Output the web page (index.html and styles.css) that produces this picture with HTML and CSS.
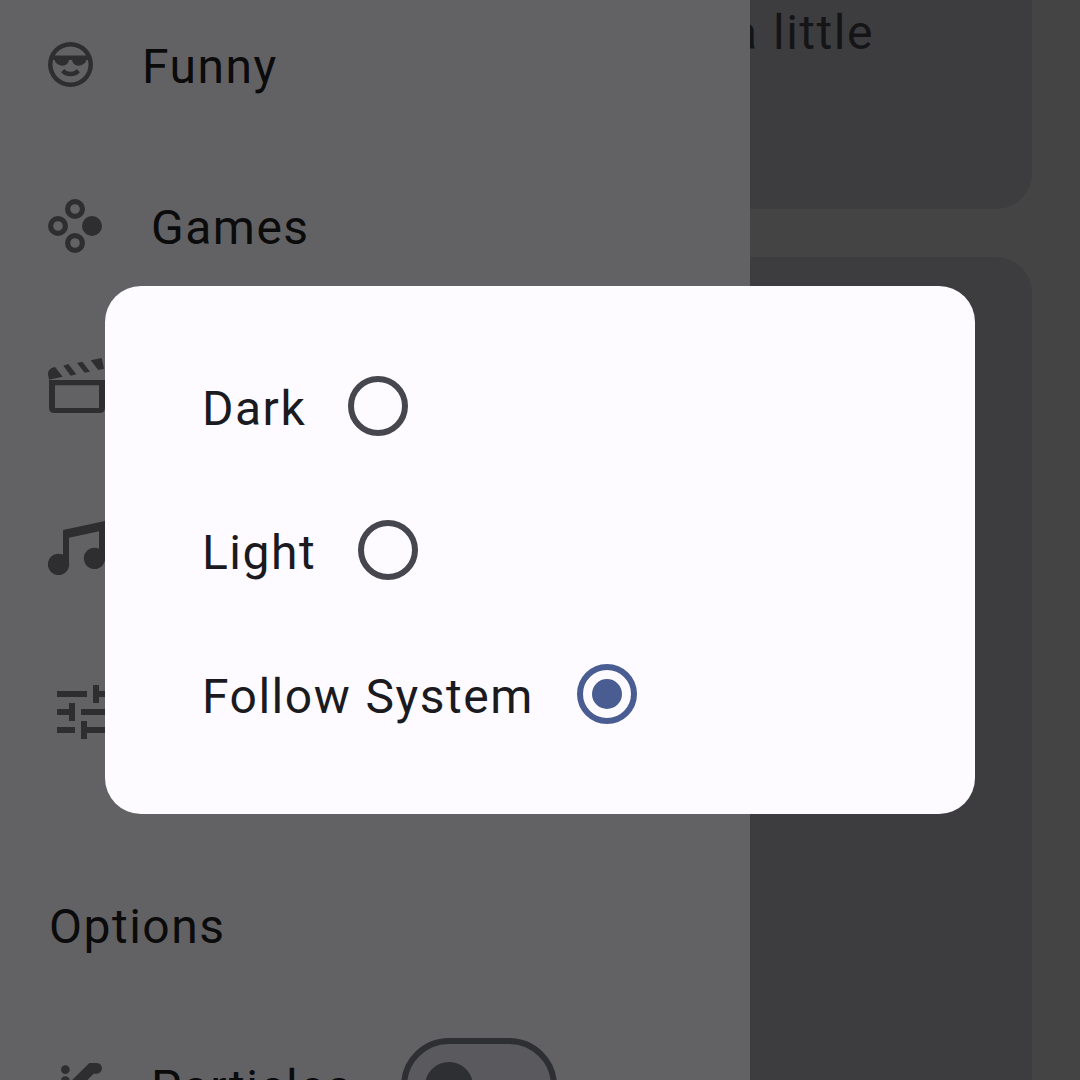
FILE: index.html
```html
<!DOCTYPE html>
<html lang="en">
<head>
<meta charset="utf-8">
<title>Theme</title>
<link rel="stylesheet" href="styles.css">
</head>
<body>
<div class="screen">
  <nav class="drawer">
    <div class="item item-first">
      <svg width="45" height="45" viewBox="2 2 20 20"><path d="M19,10C19,11.38 16.88,12.5 15.5,12.5C14.12,12.5 12.75,11.38 12.75,10H11.25C11.25,11.38 9.88,12.5 8.5,12.5C7.12,12.5 5,11.38 5,10H4.25C4.09,10.64 4,11.31 4,12A8,8 0 0,0 12,20A8,8 0 0,0 20,12C20,11.31 19.91,10.64 19.75,10H19M12,4C9.04,4 6.45,5.61 5.07,8H18.93C17.55,5.61 14.96,4 12,4M22,12A10,10 0 0,1 12,22A10,10 0 0,1 2,12A10,10 0 0,1 12,2A10,10 0 0,1 22,12M12,17.23C10.25,17.23 8.71,16.5 7.81,15.42L9.23,14C9.68,14.72 10.75,15.23 12,15.23C13.25,15.23 14.32,14.72 14.77,14L16.19,15.42C15.29,16.5 13.75,17.23 12,17.23Z"/></svg>
      <span class="label">Funny</span>
    </div>
    <div class="item">
      <svg width="54" height="54" viewBox="0 0 54 54"><g class="ring"><circle cx="27" cy="10" r="7.4"/><circle cx="10" cy="27" r="7.4"/><circle cx="27" cy="44" r="7.4"/></g><circle cx="44" cy="27" r="10"/></svg>
      <span class="label">Games</span>
    </div>
    <div class="item">
      <svg width="57" height="58" viewBox="54 54 171 174"><path d="M57 119L54 103C53 92 63 82 76 82L98 110ZM100 77L115 72L139 103L122 107ZM141 69L157 65L180 95L164 98ZM182 61L215 54L222 86L205 90Z"/><path fill-rule="evenodd" d="M57 120H225V203Q225 219 209 219H73Q57 219 57 203ZM75 136V204H207V136Z"/></svg>
    </div>
    <div class="item">
      <svg width="57" height="56" viewBox="54 60 171 168"><path d="M99 90L228 62V175H207V94L117 113V193H99Z"/><circle cx="85.5" cy="193" r="32"/><circle cx="193.500" cy="175" r="32"/></svg>
    </div>
    <div class="item item-tune">
      <svg width="72" height="72" viewBox="0 0 24 24"><path d="M3,17v2h6v-2L3,17zM3,5v2h10L13,5L3,5zM13,21v-2h8v-2h-8v-2h-2v6h2zM7,9v2L3,11v2h4v2h2L9,9L7,9zM21,13v-2L11,11v2h10zM15,9h2L17,7h4L21,5h-4L17,3h-2v6z"/></svg>
    </div>
    <div class="heading">Options</div>
    <div class="item item-switch">
      <svg class="wand" width="54" height="54" viewBox="54 126 162 162"><circle cx="106" cy="149" r="13"/><circle cx="106" cy="182" r="13"/><path d="M178 129H200A16 16 0 0 1 200 161H191L100 252L78 228Z"/></svg>
      <span class="label">Particles</span>
      <span class="switch"><span class="thumb"></span></span>
    </div>
  </nav>
  <main class="feed">
    <section class="card card-top"><p class="excerpt">a little</p></section>
    <section class="card card-next"></section>
  </main>
</div>
<div class="dialog">
  <div class="option"><span class="option-label">Dark</span><span class="radio"></span></div>
  <div class="option"><span class="option-label">Light</span><span class="radio"></span></div>
  <div class="option"><span class="option-label">Follow System</span><span class="radio checked"></span></div>
</div>
</body>
</html>
```
FILE: styles.css
```css
* { box-sizing: border-box; }
body {
  margin: 0;
  font: 48px/72px Roboto, sans-serif;
  letter-spacing: 1.5px;
  word-spacing: 1px;
  white-space: nowrap;
}
.screen {
  display: grid;
  grid-template-columns: 750px 330px;
  width: 1080px;
  height: 1080px;
  overflow: hidden;
  background: #444444;
}
.drawer {
  height: 1080px;
  overflow: hidden;
  padding-left: 48px;
  background: #626264;
  color: #0b0b0c;
}
.item {
  display: flex;
  align-items: center;
  gap: 48px;
  height: 130px;
  margin-bottom: 31px;
}
.item svg { flex: none; fill: #2e2e30; }
.item .ring { fill: none; stroke: #2e2e30; stroke-width: 5.200; }
.label { padding: 4px 0 0 1px; }
.item-first { height: 129px; margin-bottom: 32px; }
.item-tune { height: 136px; margin-bottom: 0; }
.heading { margin-top: 111px; padding-left: 1px; }
.item-switch { height: 96px; margin: 75px 0 0; }
.wand { margin-top: 6px; }
.switch {
  display: flex;
  align-items: center;
  width: 156px;
  height: 96px;
  margin-left: 1px;
  padding-left: 18px;
  border: 6px solid #2e2f33;
  border-radius: 48px;
  background: #5a595e;
}
.thumb {
  width: 48px;
  height: 48px;
  border-radius: 50%;
  background: #2e2f33;
}
.feed {
  display: flex;
  flex-direction: column;
  gap: 48px;
  height: 1080px;
  padding-right: 48px;
  overflow: hidden;
}
.card { background: #3d3d3f; color: #151517; }
.card-top { height: 209px; border-radius: 0 0 36px 0; }
.card-next { flex: 1; border-radius: 0 36px 0 0; }
.excerpt { margin: -3px 0 0 -19px; }
.dialog {
  position: absolute;
  left: 105px;
  top: 286px;
  width: 870px;
  height: 528px;
  padding: 48px 96px;
  border-radius: 36px;
  background: #fdfbff;
  color: #1b1b1f;
}
.option { display: flex; align-items: center; height: 144px; }
.option-label { padding: 6px 0.2px 0 1px; }
.radio {
  display: flex;
  align-items: center;
  justify-content: center;
  width: 60px;
  height: 60px;
  margin: 0 42px;
  border: 6px solid #46464f;
  border-radius: 50%;
}
.checked { margin-left: 43px; border-color: #495d92; }
.checked::after {
  content: "";
  width: 30px;
  height: 30px;
  border-radius: 50%;
  background: #495d92;
}
```
